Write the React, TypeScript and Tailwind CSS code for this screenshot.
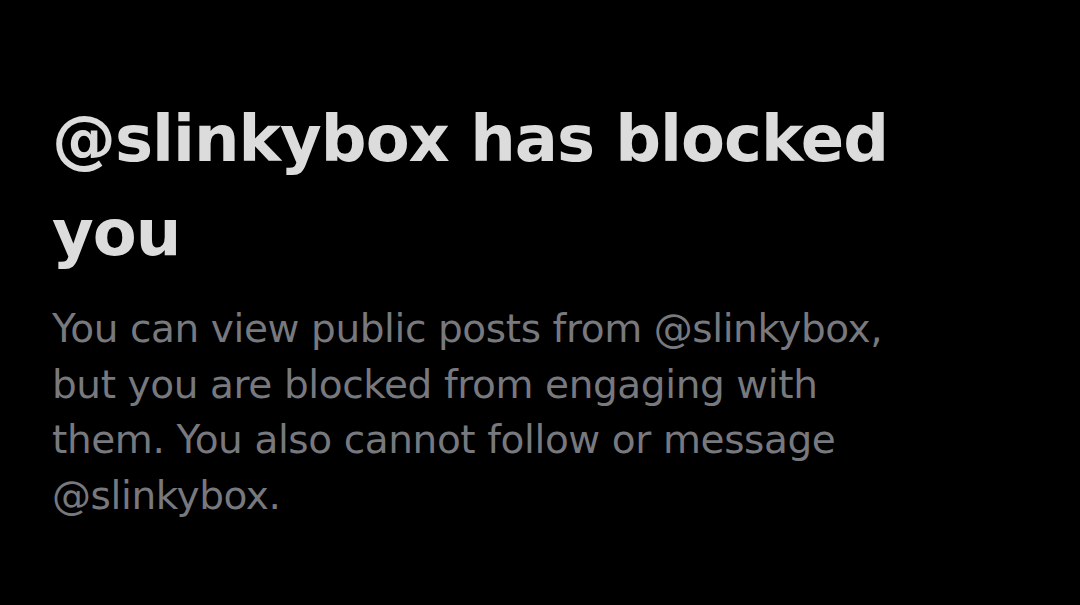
export default function App() {
  return (
    <div className="w-[1080px] h-[605px] bg-black overflow-hidden">
      <div className="pl-[52px] pr-[120px] pt-[92px]">
        <h1 className="font-['DejaVu_Sans',sans-serif] font-bold text-[64px] leading-[94px] tracking-[-1px] text-[#dcdcdc]">
          @slinkybox has blocked you
        </h1>
        <p className="mt-[21px] font-['DejaVu_Sans',sans-serif] text-[39px] leading-[55.5px] tracking-[-0.4px] text-[#77797e] w-[860px]">
          You can view public posts from @slinkybox, but you are blocked from engaging with them. You also cannot follow or message @slinkybox.
        </p>
      </div>
    </div>
  );
}
